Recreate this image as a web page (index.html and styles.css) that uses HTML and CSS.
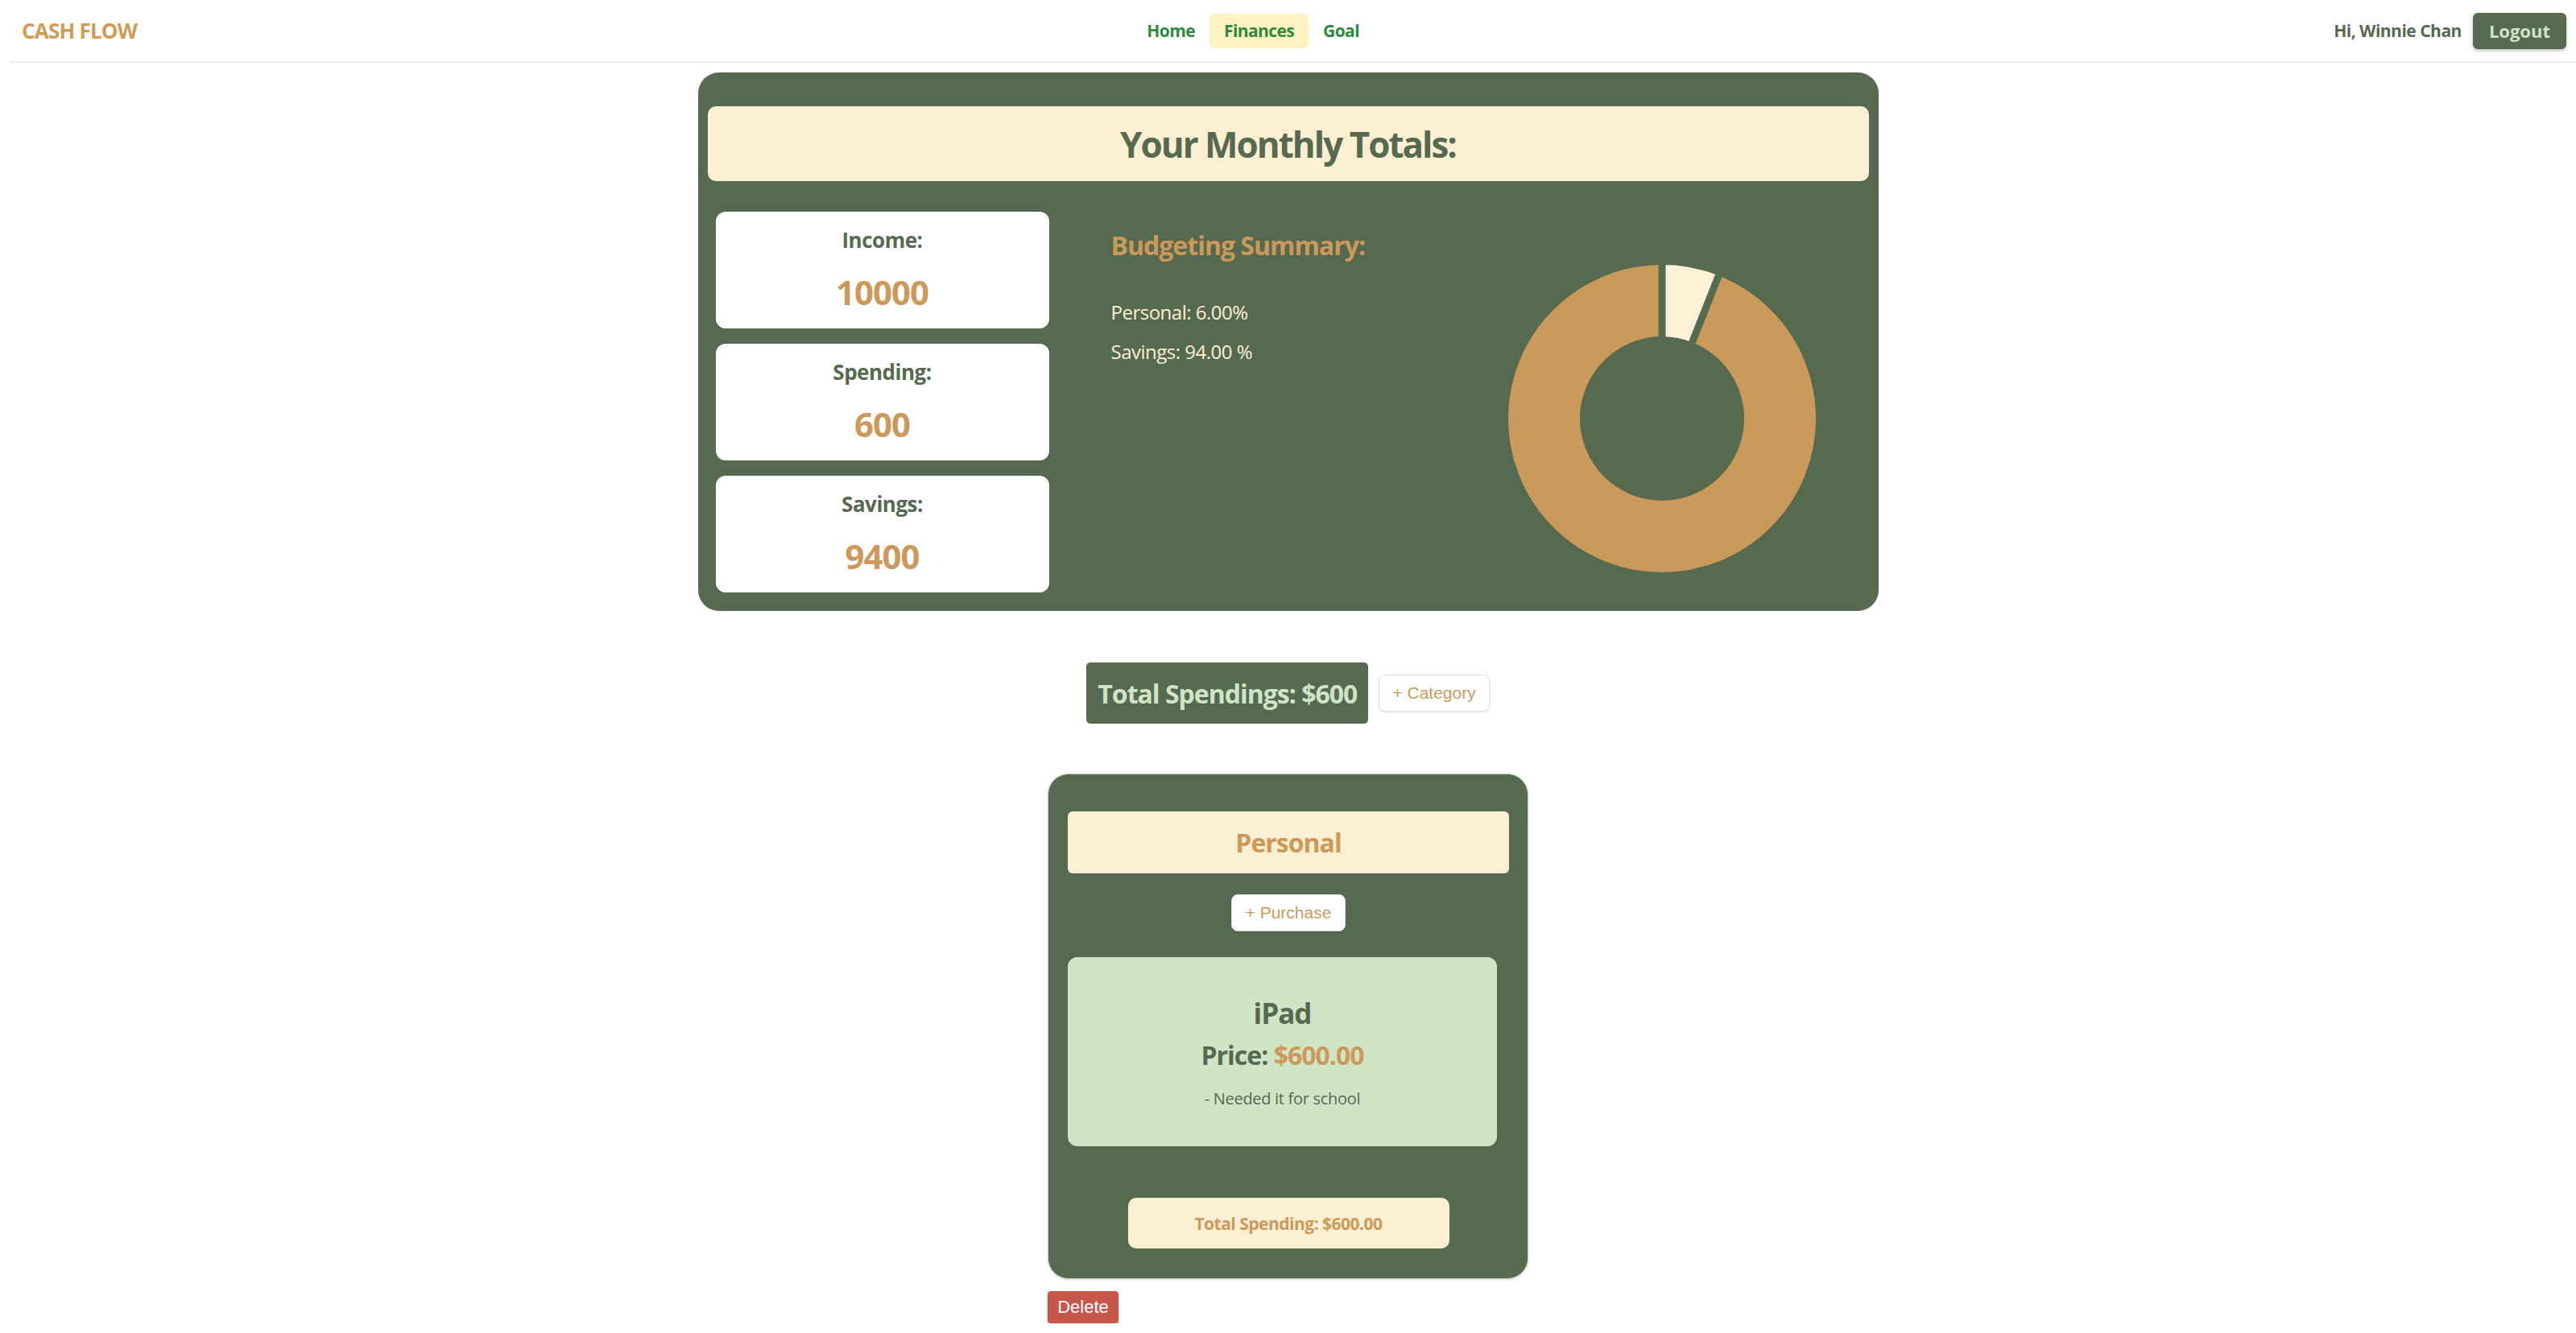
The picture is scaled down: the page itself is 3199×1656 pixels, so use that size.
FILE: index.html
```html
<!DOCTYPE html>
<html lang="en">
<head>
<meta charset="utf-8">
<title>Cash Flow - Finances</title>
<link rel="stylesheet" href="styles.css">
</head>
<body>
<nav class="navbar">
  <div class="brand">CASH FLOW</div>
  <div class="nav-links">
    <a class="nav-link">Home</a>
    <a class="nav-link active">Finances</a>
    <a class="nav-link">Goal</a>
  </div>
  <div class="user">
    <span class="greeting">Hi, Winnie Chan</span>
    <button class="logout">Logout</button>
  </div>
</nav>

<section class="totals">
  <h1 class="totals-title">Your Monthly Totals:</h1>
  <div class="totals-body">
    <div class="stats">
      <div class="stat"><div class="stat-label">Income:</div><div class="stat-value">10000</div></div>
      <div class="stat"><div class="stat-label">Spending:</div><div class="stat-value">600</div></div>
      <div class="stat"><div class="stat-label">Savings:</div><div class="stat-value">9400</div></div>
    </div>
    <div class="summary">
      <h2>Budgeting Summary:</h2>
      <p>Personal: 6.00%</p>
      <p>Savings: 94.00 %</p>
    </div>
    <svg class="chart" viewBox="0 0 382 382" width="382" height="382">
      <circle cx="191" cy="191" r="146.5" fill="none" stroke="#ca9a5b" stroke-width="89"/>
      <circle cx="191" cy="191" r="146.5" fill="none" stroke="#fdf1d7" stroke-width="89" stroke-dasharray="55.23 1000" transform="rotate(-90 191 191)"/>
      <line x1="191" y1="191" x2="191" y2="0" stroke="#566a4f" stroke-width="9"/>
      <line x1="191" y1="191" x2="191" y2="0" stroke="#566a4f" stroke-width="9" transform="rotate(21.6 191 191)"/>
    </svg>
  </div>
</section>

<div class="spend-row">
  <h2 class="spend-total">Total Spendings: $600</h2>
  <button class="btn-outline">+ Category</button>
</div>

<div class="category-wrap">
  <div class="category">
    <h3 class="category-title">Personal</h3>
    <button class="btn-outline btn-purchase">+ Purchase</button>
    <div class="purchase">
      <div class="purchase-name">iPad</div>
      <div class="purchase-price">Price: <span class="amount">$600.00</span></div>
      <div class="purchase-note">- Needed it for school</div>
    </div>
    <div class="category-total">Total Spending: $600.00</div>
  </div>
  <button class="delete">Delete</button>
</div>
</body>
</html>
```
FILE: styles.css
```css
* { box-sizing: border-box; }

body {
  margin: 0;
  font-family: "Open Sans", "Noto Sans", sans-serif;
  background: #fff;
  color: #566a4f;
}

button { font-family: "Liberation Sans", Arial, sans-serif; cursor: pointer; }

/* Navbar */
.navbar {
  display: flex;
  align-items: center;
  justify-content: space-between;
  height: 78px;
  margin-left: 13px;
  padding: 0 12px 0 14px;
  border-bottom: 2px solid #ececec;
}
.brand {
  font-size: 26px;
  font-weight: 700;
  color: #cf9b55;
  padding-right: 44px;
  letter-spacing: -0.8px;
}
.nav-links { display: flex; align-items: center; }
.nav-link {
  font-size: 21px;
  font-weight: 700;
  color: #2e8a3e;
  padding: 8px 18px;
  line-height: 27px;
  border-radius: 7px;
  letter-spacing: -0.6px;
}
.nav-link.active { background: #fff2c2; }
.user { display: flex; align-items: center; gap: 14px; }
.greeting { font-size: 21px; font-weight: 700; color: #566a4f; letter-spacing: -0.5px; }
.logout {
  font-family: "Open Sans", "Noto Sans", sans-serif;
  background: #566a4f;
  color: #cfe5c6;
  font-size: 22px;
  font-weight: 700;
  height: 45px;
  padding: 0 20px;
  border: none;
  border-radius: 6px;
  box-shadow: 0 2px 4px rgba(0, 0, 0, 0.25);
}

/* Monthly totals card */
.totals {
  width: 1466px;
  margin: 12px auto 0;
  background: #566a4f;
  border-radius: 26px;
  padding: 42px 12px 23px;
}
.totals-title {
  margin: 0;
  height: 93px;
  display: flex;
  align-items: center;
  justify-content: center;
  background: #fdefd2;
  border-radius: 10px;
  font-size: 44px;
  font-weight: 700;
  letter-spacing: -2px;
  color: #566a4f;
}
.totals-body { display: flex; margin-top: 38px; padding: 0 10px; }
.stats { display: flex; flex-direction: column; gap: 19px; width: 414px; flex: none; }
.stat {
  height: 145px;
  background: #fff;
  border-radius: 12px;
  text-align: center;
  padding-top: 17px;
}
.stat-label { font-size: 26px; font-weight: 700; line-height: 36px; letter-spacing: -0.5px; }
.stat-value { font-size: 42px; font-weight: 700; line-height: 56px; margin-top: 19px; color: #cc995a; letter-spacing: -1px; }

.summary { flex: 1; margin-left: 77px; padding-top: 20px; }
.summary h2 { margin: 0; font-size: 32px; line-height: 44px; color: #cc995a; letter-spacing: -1px; }
.summary p { margin: 15px 0 0; font-size: 24px; line-height: 34px; color: #fdefd2; letter-spacing: -0.5px; }
.summary h2 + p { margin-top: 44px; }
.chart { flex: none; width: 382px; height: 382px; margin-top: 66px; margin-right: 56px; }

/* Total spendings row */
.spend-row {
  display: flex;
  justify-content: center;
  align-items: center;
  gap: 13px;
  margin-top: 64px;
}
.spend-total {
  margin: 0;
  height: 76px;
  display: flex;
  align-items: center;
  padding: 0 14px;
  background: #566a4f;
  color: #cfe5c6;
  border-radius: 5px;
  font-size: 32px;
  font-weight: 700;
  letter-spacing: -1px;
}
.btn-outline {
  height: 46px;
  padding: 0 16px;
  font-size: 21px;
  color: #cc995a;
  background: #fff;
  border: 1px solid #e2e2e2;
  border-radius: 8px;
  box-shadow: 0 1px 3px rgba(0, 0, 0, 0.12);
}

/* Category card */
.category-wrap { width: 597px; margin: 62px auto 0; }
.category {
  display: flex;
  flex-direction: column;
  align-items: center;
  background: #566a4f;
  border: 1px solid #cfcfcf;
  border-radius: 26px;
  box-shadow: 0 1px 3px rgba(0, 0, 0, 0.15);
  padding: 46px 23px 37px 24px;
}
.category-title {
  align-self: stretch;
  margin: 0;
  height: 77px;
  display: flex;
  align-items: center;
  justify-content: center;
  background: #fdefd2;
  border-radius: 6px;
  font-size: 32px;
  font-weight: 700;
  color: #cc995a;
  letter-spacing: -1px;
}
.btn-purchase { margin-top: 26px; padding: 0 17px; }
.purchase {
  align-self: flex-start;
  width: 533px;
  height: 235px;
  margin-top: 32px;
  padding-top: 47px;
  background: #cfe5c6;
  border-radius: 12px;
  text-align: center;
}
.purchase-name { font-size: 35px; font-weight: 700; line-height: 46px; letter-spacing: -1px; }
.purchase-price { font-size: 32px; font-weight: 700; line-height: 44px; margin-top: 7px; letter-spacing: -1px; }
.purchase-price .amount { color: #cc995a; }
.purchase-note { font-size: 20px; line-height: 28px; margin-top: 18px; letter-spacing: -0.3px; }
.category-total {
  width: 399px;
  height: 63px;
  margin-top: 64px;
  display: flex;
  align-items: center;
  justify-content: center;
  background: #fdefd2;
  border-radius: 10px;
  font-size: 21px;
  font-weight: 700;
  color: #cc995a;
  letter-spacing: -0.5px;
}
.delete {
  margin-top: 15px;
  width: 88px;
  height: 40px;
  background: #c8574b;
  color: #fff;
  font-size: 22px;
  border: none;
  border-radius: 4px;
  box-shadow: 0 2px 3px rgba(0, 0, 0, 0.25);
}
```
